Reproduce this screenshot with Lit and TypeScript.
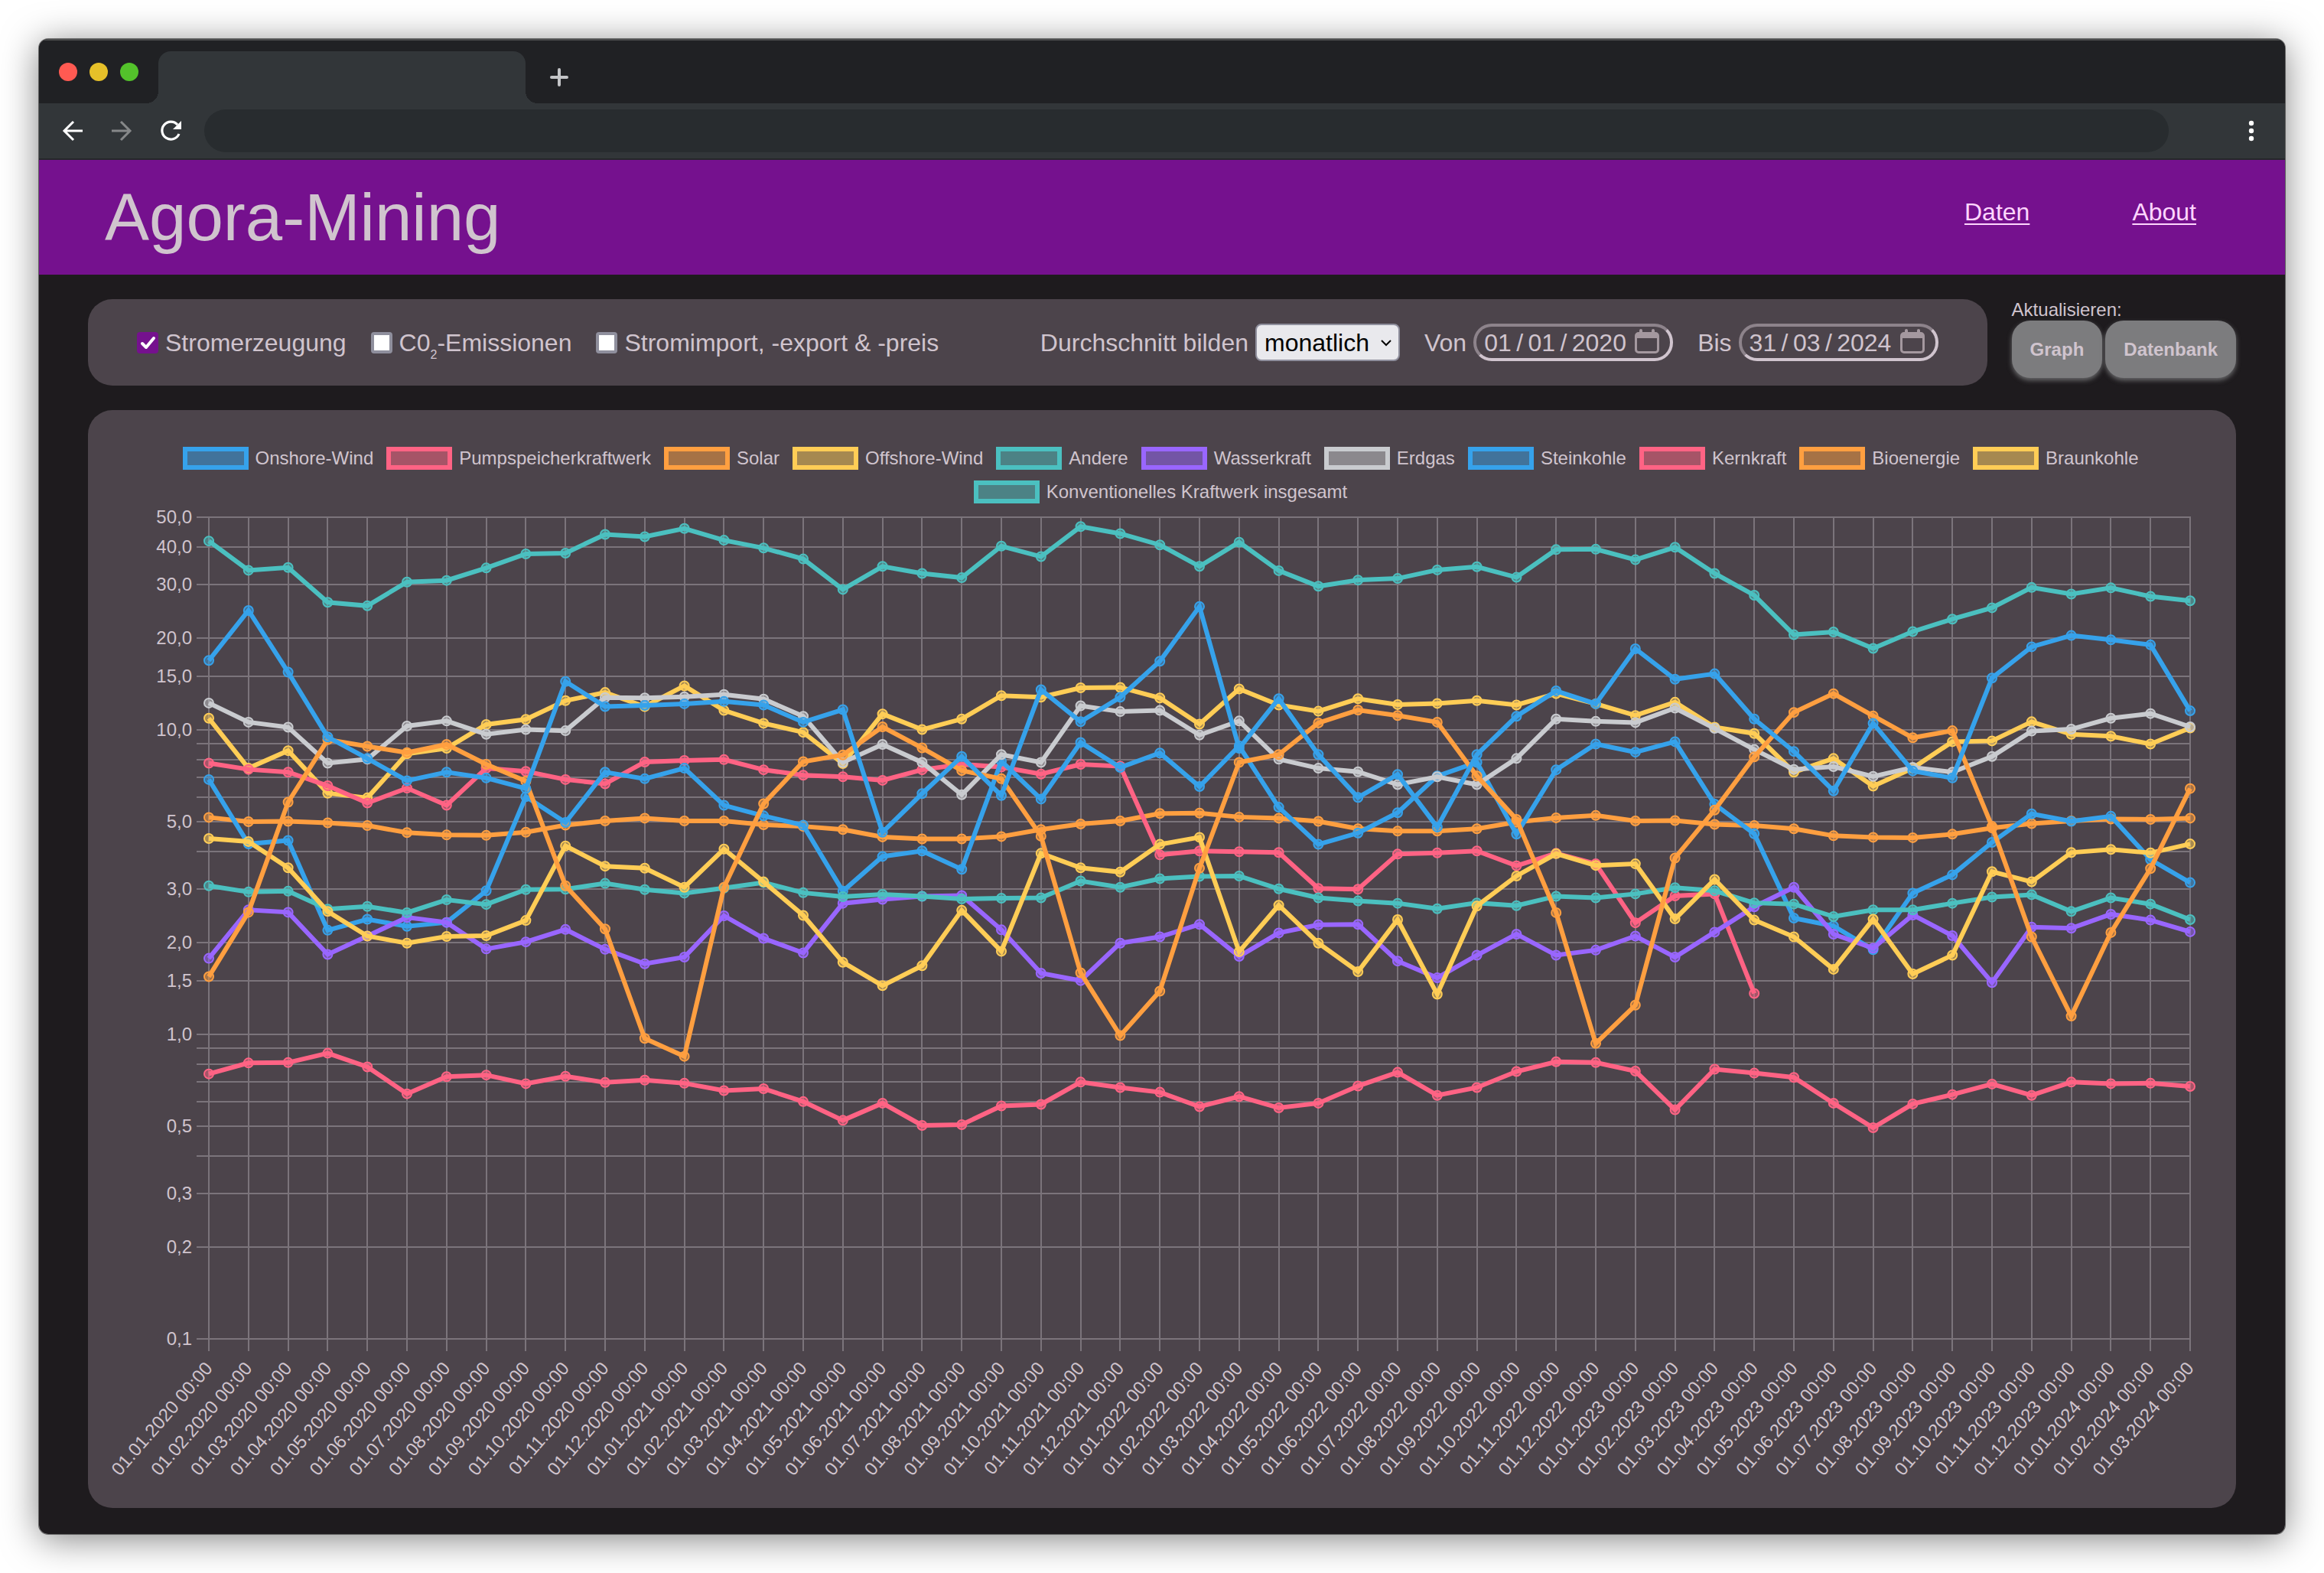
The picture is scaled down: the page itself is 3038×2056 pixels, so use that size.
import { LitElement, html, svg, css } from "lit";
import { customElement, property } from "lit/decorators.js";

const BLUE = "#36a2eb";
const RED = "#ff6384";
const ORANGE = "#ff9f40";
const YELLOW = "#ffcd56";
const TEAL = "#4bc0c0";
const PURPLE = "#9966ff";
const GREY = "#c9cbcf";

interface Series {
  name: string;
  color: string;
  /** Depth of every month on the log scale: 30 is 50,0 and 780 steps make one decade. */
  depth: number[];
}

const SERIES: Series[] = [
  { name: "Onshore-Wind", color: BLUE, depth: [
    397, 269, 427, 593, 648, 705, 683, 698, 725, 451, 515, 512,
    508, 502, 511, 555, 523, 837, 738, 643, 743, 472, 554, 491, 399,
    259, 622, 495, 638, 748, 689, 824, 638, 540, 475, 508, 367, 445,
    431, 547, 630, 731, 558, 680, 698, 442, 362, 333, 344, 357, 526] },
  { name: "Pumpspeicherkraftwerk", color: RED, depth: [
    1456, 1428, 1427, 1403, 1438, 1507, 1463, 1459, 1481, 1462, 1478, 1472,
    1480, 1499, 1494, 1527, 1575, 1531, 1588, 1586, 1538, 1534, 1477, 1491, 1503,
    1540, 1514, 1543, 1531, 1487, 1452, 1511, 1491, 1450, 1425, 1427, 1449, 1548,
    1444, 1454, 1465, 1531, 1594, 1533, 1509, 1482, 1511, 1477, 1481, 1480, 1488] },
  { name: "Solar", color: ORANGE, depth: [
    1207, 1042, 760, 600, 617, 633, 612, 663, 706, 974, 1085, 1365,
    1411, 978, 764, 656, 639, 567, 621, 679, 700, 847, 1197, 1358, 1244,
    929, 658, 638, 557, 524, 538, 555, 693, 804, 1043, 1378, 1280, 903,
    780, 644, 530, 482, 539, 595, 577, 822, 1105, 1308, 1094, 930, 725] },
  { name: "Offshore-Wind", color: YELLOW, depth: [
    853, 861, 928, 1040, 1103, 1121, 1104, 1102, 1063, 872, 924, 929,
    978, 880, 964, 1050, 1170, 1230, 1179, 1037, 1142, 891, 928, 939, 868,
    850, 1143, 1024, 1121, 1194, 1061, 1252, 1026, 949, 892, 922, 918, 1059,
    958, 1062, 1105, 1188, 1060, 1200, 1152, 938, 964, 889, 881, 890, 867] },
  { name: "Andere", color: TEAL, depth: [
    974, 990, 988, 1034, 1027, 1043, 1010, 1022, 984, 983, 968, 984,
    993, 980, 966, 992, 1002, 996, 1001, 1008, 1006, 1005, 962, 978, 956,
    950, 949, 982, 1005, 1013, 1019, 1033, 1018, 1025, 1001, 1005, 995, 979,
    987, 1018, 1021, 1053, 1036, 1036, 1019, 1003, 997, 1040, 1005, 1021, 1061] },
  { name: "Wasserkraft", color: PURPLE, depth: [
    1160, 1036, 1042, 1150, 1103, 1055, 1068, 1136, 1118, 1086, 1137, 1174,
    1157, 1051, 1109, 1146, 1019, 1009, 1001, 999, 1087, 1198, 1217, 1121, 1105,
    1073, 1155, 1095, 1074, 1073, 1167, 1210, 1152, 1098, 1152, 1139, 1103, 1157,
    1093, 1028, 978, 1098, 1134, 1049, 1102, 1222, 1080, 1083, 1047, 1062, 1092] },
  { name: "Erdgas", color: GREY, depth: [
    506, 555, 568, 660, 650, 565, 552, 586, 574, 577, 492, 493,
    490, 484, 496, 540, 658, 612, 658, 741, 638, 658, 513, 528, 525,
    588, 552, 650, 673, 682, 715, 695, 715, 648, 547, 553, 556, 519,
    571, 625, 676, 669, 694, 671, 683, 643, 578, 573, 545, 533, 567] },
  { name: "Steinkohle", color: BLUE, depth: [
    702, 867, 858, 1088, 1060, 1078, 1068, 987, 746, 812, 683, 700,
    673, 768, 795, 819, 988, 899, 885, 932, 655, 752, 607, 671, 634,
    720, 616, 773, 868, 839, 787, 693, 658, 842, 677, 611, 632, 605,
    765, 841, 1057, 1077, 1138, 993, 946, 863, 790, 809, 796, 907, 966] },
  { name: "Kernkraft", color: RED, depth: [
    660, 676, 683, 718, 762, 724, 768, 673, 681, 702, 713, 657,
    653, 651, 677, 691, 695, 704, 677, 663, 670, 688, 663, 668, 895,
    885, 887, 889, 981, 983, 893, 890, 885, 923, 891, 918, 1069, 1000,
    995, 1250] },
  { name: "Bioenergie", color: ORANGE, depth: [
    799, 810, 809, 813, 820, 838, 844, 845, 837, 819, 808, 801,
    808, 808, 818, 822, 830, 849, 854, 854, 848, 830, 816, 808, 789,
    788, 798, 801, 809, 828, 834, 834, 828, 811, 800, 794, 808, 807,
    817, 820, 828, 846, 850, 851, 842, 826, 815, 808, 803, 804, 801] },
  { name: "Braunkohle", color: YELLOW, depth: [
    545, 673, 628, 737, 749, 636, 622, 561, 548, 500, 479, 515,
    462, 525, 558, 581, 661, 534, 574, 547, 487, 491, 467, 466, 493,
    560, 470, 511, 527, 495, 510, 507, 500, 511, 482, 508, 538, 504,
    568, 584, 683, 648, 719, 673, 605, 603, 554, 586, 591, 611, 570] },
  { name: "Konventionelles Kraftwerk insgesamt", color: TEAL, depth: [
    91, 166, 159, 248, 257, 196, 192, 160, 124, 122, 74, 80,
    59, 89, 109, 137, 215, 156, 174, 185, 104, 131, 54, 72, 101,
    156, 94, 167, 207, 191, 187, 165, 157, 184, 113, 112, 139, 107,
    174, 230, 331, 324, 366, 323, 291, 262, 210, 227, 211, 233, 244] },
];

const MONTHS = 51;
const LEFT = 158;
const RIGHT = 2748;
const TOP = 18;
const BOTTOM = 1092;
const DECADE = 398;

const xAt = (i: number) => LEFT + ((RIGHT - LEFT) * i) / (MONTHS - 1);
const yOfDepth = (d: number) => TOP + ((d - 30) * DECADE) / 780;
const yOfValue = (v: number) => Math.round(TOP + DECADE * Math.log10(50 / v));

const LABELLED = [50, 40, 30, 20, 15, 10, 5, 3, 2, 1.5, 1, 0.5, 0.3, 0.2, 0.1];
const UNLABELLED = [9, 8, 7, 6, 4, 0.9, 0.8, 0.7, 0.6, 0.4];

const dateLabel = (i: number) => {
  const month = String((i % 12) + 1).padStart(2, "0");
  return `01.${month}.${2020 + Math.floor(i / 12)} 00:00`;
};

@customElement("energy-chart")
export class EnergyChart extends LitElement {
  @property({ attribute: false }) series: Series[] = [];

  static styles = css`
    :host { display: block; }
    .legend {
      display: flex;
      flex-wrap: wrap;
      justify-content: center;
      gap: 14px 17px;
      margin: 0;
      padding: 0 26px 0 22px;
      list-style: none;
    }
    .entry {
      display: flex;
      align-items: center;
      gap: 9px;
      height: 30px;
      font-size: 24px;
      line-height: 30px;
      white-space: nowrap;
    }
    .swatch { display: block; width: 86px; height: 30px; }
    .plot { display: block; width: 100%; height: auto; }
    .grid { stroke: #7b747b; stroke-width: 2; }
    .tick { fill: #d0c4ce; font-size: 24px; text-anchor: end; }
  `;

  private renderSeries(s: Series) {
    const pts = s.depth.map((d, i) => [xAt(i), yOfDepth(d)]);
    return svg`<g stroke=${s.color} fill="none">
      <polyline points=${pts.map((p) => p.join(",")).join(" ")} stroke-width="6" stroke-linejoin="miter"></polyline>
      ${pts.map((p) => svg`<circle cx=${p[0]} cy=${p[1]} r="6" stroke-width="2" fill=${s.color} fill-opacity="0.5"></circle>`)}
    </g>`;
  }

  render() {
    const columns = Array.from({ length: MONTHS }, (_, i) => i);
    return html`
      <ul class="legend">
        ${this.series.map((s) => html`<li class="entry">
          <svg class="swatch" viewBox="0 0 86 30" aria-hidden="true">
            <rect x="3" y="3" width="80" height="24" stroke-width="6" stroke=${s.color} fill=${s.color} fill-opacity="0.5"></rect>
          </svg>
          <span>${s.name}</span>
        </li>`)}
      </ul>
      <svg class="plot" viewBox="0 0 2808 1281" role="img" aria-label="Stromerzeugung">
        <g class="grid">
          ${columns.map((i) => svg`<line x1=${Math.round(xAt(i))} x2=${Math.round(xAt(i))} y1=${TOP} y2=${BOTTOM + 16}></line>`)}
          ${[...LABELLED, ...UNLABELLED].map((v) => svg`<line x1=${LEFT - 16} x2=${RIGHT + 1} y1=${yOfValue(v)} y2=${yOfValue(v)}></line>`)}
        </g>
        ${[...this.series].reverse().map((s) => this.renderSeries(s))}
        ${LABELLED.map((v) => svg`<text class="tick" x=${LEFT - 22} y=${yOfValue(v) + 8}>${v.toFixed(1).replace(".", ",")}</text>`)}
        ${columns.map((i) => svg`<text class="tick" transform=${`translate(${xAt(i)} ${BOTTOM + 34}) rotate(-49)`} y="8">${dateLabel(i)}</text>`)}
      </svg>
    `;
  }
}

@customElement("browser-chrome")
export class BrowserChrome extends LitElement {
  static styles = css`
    :host { display: block; }
    button { border: 0; padding: 0; background: none; display: block; }
    svg { display: block; }
    .strip {
      display: flex;
      align-items: flex-end;
      height: 84px;
      padding-left: 26px;
      background: #202124;
      box-shadow: inset 0 2px 0 #4b4c4d;
    }
    .lights { display: flex; gap: 16px; align-self: center; padding: 2px 26px 0 0; }
    .light { width: 24px; height: 24px; border-radius: 50%; }
    .close { background: #ff5a52; }
    .shrink { background: #e6c029; }
    .grow { background: #53c22b; }
    .tab {
      position: relative;
      width: 480px;
      height: 68px;
      border-radius: 16px 16px 0 0;
      background: #323639;
    }
    .tab::before, .tab::after {
      content: "";
      position: absolute;
      bottom: 0;
      width: 16px;
      height: 16px;
    }
    .tab::before { left: -16px; background: radial-gradient(circle at 0 0, #202124 16px, #323639 16px); }
    .tab::after { right: -16px; background: radial-gradient(circle at 100% 0, #202124 16px, #323639 16px); }
    .add { margin: 0 0 22px 32px; }
    .bar {
      display: flex;
      align-items: center;
      height: 74px;
      padding: 0 30px;
      box-sizing: border-box;
      border-bottom: 2px solid #25282a;
      background: #323639;
    }
    .nav { display: flex; gap: 36px; margin-right: 30px; }
    .address {
      flex: 1;
      min-width: 0;
      height: 56px;
      box-sizing: border-box;
      border: 0;
      border-radius: 28px;
      padding: 0 28px;
      background: #282c2f;
      color: #e8eaed;
      font-size: 28px;
    }
    .menu { margin-left: 94px; }
  `;

  render() {
    return html`
      <div class="strip">
        <div class="lights">
          <button class="light close" aria-label="Schließen"></button>
          <button class="light shrink" aria-label="Minimieren"></button>
          <button class="light grow" aria-label="Maximieren"></button>
        </div>
        <div class="tab"></div>
        <button class="add" aria-label="Neuer Tab">
          <svg width="24" height="24" viewBox="0 0 24 24" stroke="#c3c4c7" stroke-width="4" stroke-linecap="round"><path d="M12 2V22M2 12H22"></path></svg>
        </button>
      </div>
      <div class="bar">
        <div class="nav">
          <button aria-label="Zurück">
            <svg width="28" height="28" viewBox="0 0 28 28" fill="none" stroke="#fff" stroke-width="3"><path d="M27 14H3M15 2L3 14L15 26"></path></svg>
          </button>
          <button aria-label="Vor">
            <svg width="28" height="28" viewBox="0 0 28 28" fill="none" stroke="#868889" stroke-width="3"><path d="M1 14H25M13 2L25 14L13 26"></path></svg>
          </button>
          <button aria-label="Neu laden">
            <svg width="28" height="28" viewBox="0 0 28 28"><path d="M23 6A11.500 11.500 0 1 0 25 18" fill="none" stroke="#fff" stroke-width="3.200"></path><path d="M28 1V12H17Z" fill="#fff"></path></svg>
          </button>
        </div>
        <input class="address" type="text" aria-label="Adresse" />
        <button class="menu" aria-label="Menü">
          <svg width="28" height="28" viewBox="0 0 28 28" fill="#fff"><circle cx="14" cy="4" r="3.200"></circle><circle cx="14" cy="14" r="3.200"></circle><circle cx="14" cy="24" r="3.200"></circle></svg>
        </button>
      </div>
    `;
  }
}

@customElement("app-root")
export class AppRoot extends LitElement {
  static styles = css`
    :host {
      display: block;
      padding: 51px;
      background: #fff;
      color: #d0c4ce;
      font-family: "Liberation Sans", Arial, sans-serif;
      font-size: 32px;
      line-height: 36px;
    }
    .window {
      overflow: hidden;
      border-radius: 12px;
      background: #1e1b1e;
    }
    .shade {
      border-radius: 12px;
      box-shadow: 0 0 0 1px rgba(0, 0, 0, 0.5), 0 6px 48px rgba(0, 0, 0, 0.5);
    }
    .header {
      display: flex;
      justify-content: space-between;
      align-items: center;
      height: 150px;
      padding: 0 116px 0 86px;
      background: #75118e;
    }
    .title { margin: 0; font-size: 87px; font-weight: 400; line-height: 100px; }
    .links { display: flex; gap: 134px; padding-bottom: 14px; }
    .link { color: #ffd6fe; text-decoration-thickness: 2px; text-underline-offset: 4px; }
    .main { padding: 32px 64px 34px; }
    .row { display: flex; gap: 32px; margin-bottom: 32px; }
    .panel { border-radius: 32px; background: #4c444b; }
    .controls {
      display: flex;
      flex: 1;
      justify-content: space-between;
      align-items: center;
      min-height: 113px;
      box-sizing: border-box;
      padding: 0 64px;
    }
    .group { display: flex; align-items: center; gap: 32px; white-space: nowrap; }
    .option { display: flex; align-items: center; gap: 9px; }
    .option sub { font-size: 16px; line-height: 0; vertical-align: -10px; }
    .box {
      appearance: none;
      width: 28px;
      height: 28px;
      margin: 0;
      border: 4px solid #8f8f9d;
      border-radius: 4px;
      background: #fff;
    }
    .box:checked { border-color: #75118e; background: #75118e; }
    .check { position: relative; display: flex; }
    .mark { position: absolute; inset: 0; pointer-events: none; }
    .select { position: relative; display: flex; }
    .interval {
      appearance: none;
      width: 189px;
      height: 49px;
      border: 2px solid #8f8f9d;
      border-radius: 8px;
      padding: 0 10px;
      background: #e9e9ed;
      color: #000;
      font: inherit;
    }
    .chevron { position: absolute; right: 10px; top: 18px; pointer-events: none; }
    .date {
      display: flex;
      align-items: center;
      height: 49px;
      box-sizing: border-box;
      padding: 0 14px 0 10px;
      border: 4px solid;
      border-color: #8d838b #d0c4ce #d0c4ce #8d838b;
      border-radius: 24px;
    }
    .day {
      width: 197px;
      border: 0;
      padding: 0;
      background: none;
      color: inherit;
      font: inherit;
    }
    .calendar { border: 0; padding: 0 0 3px; background: none; }
    .calendar svg { display: block; }
    .refresh { font-size: 24px; line-height: 28px; }
    .refresh p { margin: 0; }
    .actions { display: flex; gap: 4px; }
    .action {
      height: 75px;
      padding: 0 24px;
      border: 0;
      border-radius: 24px;
      background: #7c7c7e;
      box-shadow: 0 3px 6px #6c6c6e;
      color: #d0c4ce;
      font: bold 24px "Liberation Sans", Arial, sans-serif;
    }
    .chart { padding: 48px 0 32px; }
  `;

  private dateField(id: string, label: string, value: string) {
    return html`<div class="option">
      <label for=${id}>${label}</label>
      <div class="date">
        <input class="day" id=${id} type="text" .value=${value} />
        <button class="calendar" aria-label="Kalender öffnen">
          <svg width="32" height="32" viewBox="0 0 32 32" fill="#a4989f">
            <path fill-rule="evenodd" d="M6 4V2A2 2 0 0 1 10 2V4H22V2A2 2 0 0 1 26 2V4H27A5 5 0 0 1 32 9V27A5 5 0 0 1 27 32H5A5 5 0 0 1 0 27V9A5 5 0 0 1 5 4ZM3 12V27A2 2 0 0 0 5 29H27A2 2 0 0 0 29 27V12Z"></path>
          </svg>
        </button>
      </div>
    </div>`;
  }

  render() {
    return html`
      <div class="shade"><div class="window">
        <browser-chrome></browser-chrome>
        <header class="header">
          <h1 class="title">Agora-Mining</h1>
          <nav class="links">
            <a class="link" href="#daten">Daten</a>
            <a class="link" href="#about">About</a>
          </nav>
        </header>
        <main class="main">
          <div class="row">
            <div class="panel controls">
              <div class="group">
                <label class="option">
                  <span class="check">
                    <input class="box" type="checkbox" checked />
                    <svg class="mark" width="28" height="28" viewBox="0 0 28 28" fill="none" stroke="#fff" stroke-width="4" stroke-linecap="round" stroke-linejoin="round"><path d="M7 15L12 20L22 8"></path></svg>
                  </span>
                  <span>Stromerzeugung</span>
                </label>
                <label class="option">
                  <input class="box" type="checkbox" />
                  <span>C0<sub>2</sub>-Emissionen</span>
                </label>
                <label class="option">
                  <input class="box" type="checkbox" />
                  <span>Stromimport, -export &amp; -preis</span>
                </label>
              </div>
              <div class="group">
                <div class="option">
                  <label for="interval">Durchschnitt bilden</label>
                  <div class="select">
                    <select class="interval" id="interval"><option>monatlich</option></select>
                    <svg class="chevron" width="16" height="14" viewBox="0 0 16 14" fill="none" stroke="#000" stroke-width="2"><path d="M2 4L8 10L14 4"></path></svg>
                  </div>
                </div>
                ${this.dateField("from", "Von", "01\u2009/\u200901\u2009/\u20092020")}
                ${this.dateField("to", "Bis", "31\u2009/\u200903\u2009/\u20092024")}
              </div>
            </div>
            <div class="refresh">
              <p>Aktualisieren:</p>
              <div class="actions">
                <button class="action">Graph</button>
                <button class="action">Datenbank</button>
              </div>
            </div>
          </div>
          <section class="panel chart">
            <energy-chart .series=${SERIES}></energy-chart>
          </section>
        </main>
      </div></div>
    `;
  }
}
